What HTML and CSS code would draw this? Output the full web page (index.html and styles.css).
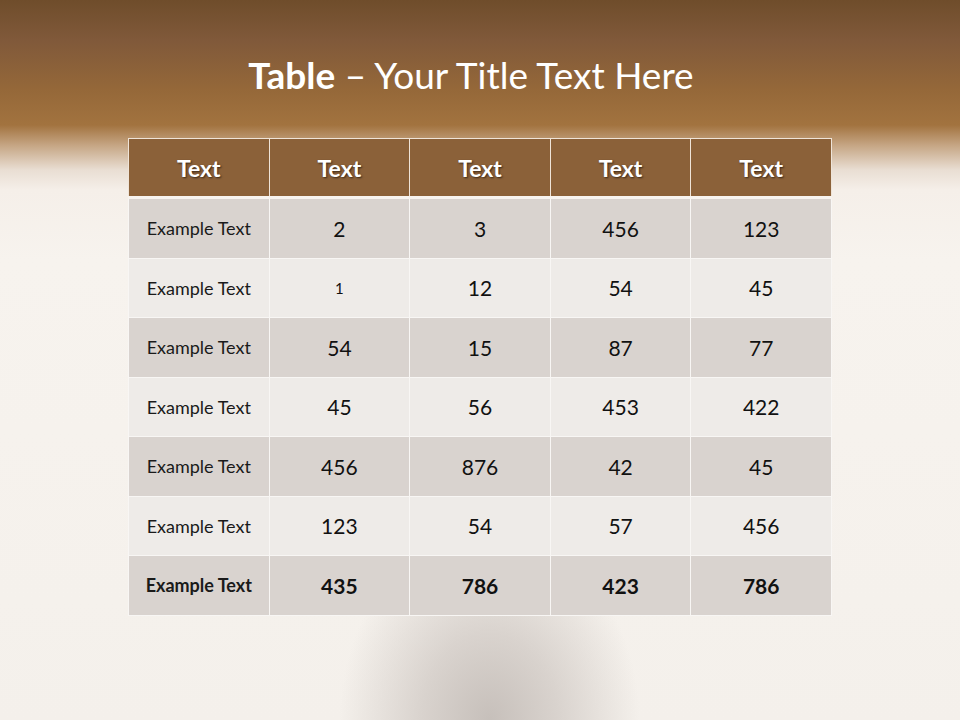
FILE: index.html
```html
<!DOCTYPE html>
<html>
<head>
<meta charset="utf-8">
<link rel="stylesheet" href="styles.css">
</head>
<body>
<div class="slide">
  <h1 class="title"><b>Table</b> – Your Title Text Here</h1>
  <table class="tbl">
    <thead>
      <tr><th>Text</th><th>Text</th><th>Text</th><th>Text</th><th>Text</th></tr>
    </thead>
    <tbody>
      <tr class="dark"><td class="lbl">Example Text</td><td>2</td><td>3</td><td>456</td><td>123</td></tr>
      <tr class="light"><td class="lbl">Example Text</td><td class="small">1</td><td>12</td><td>54</td><td>45</td></tr>
      <tr class="dark"><td class="lbl">Example Text</td><td>54</td><td>15</td><td>87</td><td>77</td></tr>
      <tr class="light"><td class="lbl">Example Text</td><td>45</td><td>56</td><td>453</td><td>422</td></tr>
      <tr class="dark"><td class="lbl">Example Text</td><td>456</td><td>876</td><td>42</td><td>45</td></tr>
      <tr class="light"><td class="lbl">Example Text</td><td>123</td><td>54</td><td>57</td><td>456</td></tr>
      <tr class="dark total"><td class="lbl">Example Text</td><td>435</td><td>786</td><td>423</td><td>786</td></tr>
    </tbody>
  </table>
</div>
</body>
</html>
```

FILE: styles.css
```css
html, body {
  margin: 0;
  padding: 0;
}
body {
  width: 960px;
  height: 720px;
  overflow: hidden;
  font-family: Lato, "Open Sans", sans-serif;
  background:
    radial-gradient(ellipse 150px 190px at 51% 100%, rgba(196,189,184,0.95) 0%, rgba(205,198,193,0.7) 45%, rgba(246,242,237,0) 100%),
    linear-gradient(to bottom, #6f4d2b 0px, #80593a 40px, #956839 90px, #a2733f 125px, #c5a583 145px, #e9ded3 170px, #f5efe9 190px, #f7f3ee 260px, #f5f1ec 600px, #f4f0eb 720px);
}
.slide {
  display: flex;
  flex-direction: column;
  align-items: center;
}
.title {
  margin: 52px 18px 0 0;
  height: 86px;
  font-weight: 400;
  font-size: 37px;
  line-height: 46px;
  color: #ffffff;
}
.title b {
  font-weight: 700;
}
.tbl {
  width: 704px;
  border-collapse: collapse;
  table-layout: fixed;
}
.tbl th {
  height: 57px;
  background: #8b6139;
  color: #ffffff;
  font-size: 23px;
  font-weight: 700;
  text-shadow: 1px 1px 2px rgba(0,0,0,0.6);
  border: 1px solid #efe4d8;
  border-bottom: 3px solid #f7f3ef;
  padding: 0;
  text-align: center;
}
.tbl td {
  height: 58.5px;
  border: 1px solid #f8f6f4;
  padding: 0;
  text-align: center;
  font-size: 21px;
  color: #111111;
}
.tbl td.lbl {
  font-size: 18px;
  color: #1a1a1a;
}
.tbl td.small {
  font-size: 15px;
}
.dark td {
  background: #d9d3cf;
}
.light td {
  background: #eeebe8;
}
.total td {
  font-weight: 700;
}
```
